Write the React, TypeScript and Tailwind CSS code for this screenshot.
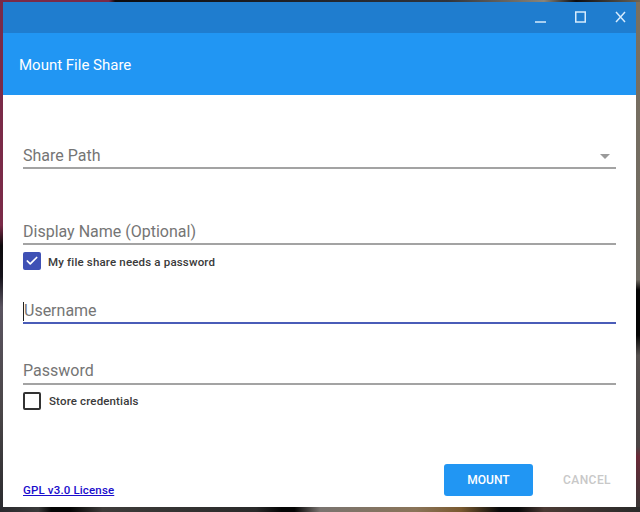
import { Check } from "lucide-react";

function Field({
  label,
  className,
  focused,
  arrow,
}: {
  label: string;
  className: string;
  focused?: boolean;
  arrow?: boolean;
}) {
  return (
    <div
      className={`flex h-[32px] items-center justify-between border-b-2 ${
        focused ? "border-[#4a5cb8]" : "border-[#a3a3a3]"
      } ${className}`}
    >
      <span className="flex items-center text-[16px] text-[#757575]">
        {focused && <span className="h-[19px] w-px bg-[#222]" />}
        {label}
      </span>
      {arrow && (
        <svg width="10" height="5" viewBox="0 0 10 5" className="mr-[6px]">
          <path d="M0 0h10l-5 5z" fill="#9a9a9a" />
        </svg>
      )}
    </div>
  );
}

export default function App() {
  return (
    <div className="flex h-[512px] w-[640px] flex-col overflow-hidden bg-[linear-gradient(to_bottom,#7a2a48_0%,#7a2a48_44%,#0c0a0c_48%,#15121a_54%,#5a5460_60%,#4a4648_80%,#2a2a2e_100%)] font-['Roboto',sans-serif]">
      <div className="h-[2px] shrink-0 bg-[linear-gradient(to_right,#7a2a48_0%,#7a2a48_17%,#0c0c10_18%,#30343c_70%,#8a8478_85%,#0c0c10_90%,#6a6458_100%)]" />
      <div className="flex min-h-0 flex-1 pl-[3px]">
        <div className="flex min-w-0 flex-1 flex-col bg-white">
          <div className="flex h-[31px] shrink-0 items-center justify-end bg-[#1f7dcf] text-[#d6ebfd]">
            <svg width="98" height="31" viewBox="0 0 98 31" fill="none" stroke="currentColor" strokeWidth="1.5" className="mr-[4px]">
              <path d="M1 20h11" />
              <rect x="41.75" y="10" width="9.5" height="10" />
              <path d="M82 11l9 10M91 11l-9 10" transform="translate(0 -1)" />
            </svg>
          </div>
          <div className="flex h-[62px] shrink-0 items-center bg-[#2196f3] pl-[16px] pt-[2px] text-[15px] text-white">
            Mount File Share
          </div>
          <div className="flex flex-1 flex-col px-[20px]">
            <Field label="Share Path" arrow className="mt-[42px] pt-[8px]" />
            <Field label="Display Name (Optional)" className="mt-[44px] pt-[8px]" />
            <label className="mt-[7px] flex h-[18px] items-center gap-[7px] text-[11.5px] font-medium tracking-[0.17px] text-[#3a3a3a]">
              <span className="flex h-[18px] w-[18px] items-center justify-center rounded-[2px] bg-[#3f51b5]">
                <Check size={14} strokeWidth={3} className="text-white" />
              </span>
              <span className="pt-[3px]">My file share needs a password</span>
            </label>
            <Field label="Username" focused className="mt-[22px] pt-[8px]" />
            <Field label="Password" className="mt-[29px] pt-[5px]" />
            <label className="mt-[7px] flex h-[18px] items-center gap-[8px] text-[11.5px] font-medium tracking-[0.15px] text-[#3a3a3a]">
              <span className="h-[18px] w-[18px] rounded-[2px] border-2 border-[#333]" />
              <span className="pt-[2px]">Store credentials</span>
            </label>
            <div className="mt-auto flex items-end justify-between pb-[11px]">
              <a href="#" className="-mb-[3px] text-[11.5px] font-medium tracking-[0.15px] text-[#1a0dcc] underline">
                GPL v3.0 License
              </a>
              <div className="flex items-center">
                <button className="h-[32px] w-[89px] rounded-[3px] bg-[#2196f3] text-[12px] font-medium text-white">
                  MOUNT
                </button>
                <button className="ml-[25px] h-[32px] w-[58px] text-[12px] font-medium tracking-[0.45px] text-[#c8c8c8]">
                  CANCEL
                </button>
              </div>
            </div>
          </div>
        </div>
        <div className="w-[4px] shrink-0 bg-[linear-gradient(to_bottom,#7a7060_0%,#6e6a62_55%,#050505_57%,#050505_66%,#55504e_70%,#4a4444_88%,#6a2a38_90%,#3a3636_100%)]" />
      </div>
      <div className="h-[5px] shrink-0 bg-[linear-gradient(to_right,#2a2a2e_0%,#3a3a3a_6%,#050505_8%,#050505_11%,#3e3c3a_16%,#2a2a2a_40%,#050505_44%,#050505_46%,#7a7470_50%,#8a7458_65%,#7a5a30_72%,#0a0a0a_78%,#0a0a0a_81%,#4a3a34_85%,#2a2a2a_100%)]" />
    </div>
  );
}
